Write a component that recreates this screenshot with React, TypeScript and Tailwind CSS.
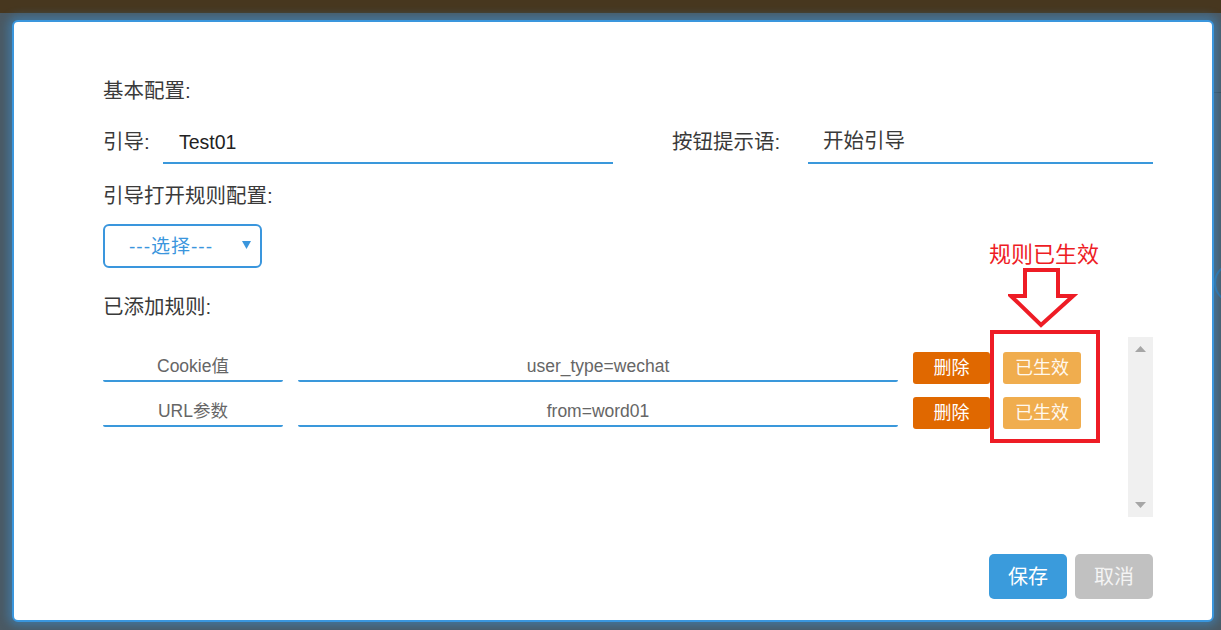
import React from "react";

const font = "font-['Liberation_Sans','Noto_Sans_CJK_SC',sans-serif]";

function RuleRow({ type, value }: { type: string; value: string }) {
  return (
    <div className="flex items-start h-[32px]">
      <div className="w-[180px] h-[30px] border-b-2 border-[#3a98db] rounded-b-[2px] flex items-center justify-center text-[17.5px] text-[#666]">
        {type}
      </div>
      <div className="ml-[15px] w-[600px] h-[30px] border-b-2 border-[#3a98db] rounded-b-[2px] flex items-center justify-center text-[17.5px] text-[#666]">
        {value}
      </div>
      <button className="ml-[15px] w-[77px] h-[32px] rounded-[3px] bg-[#e06800] text-white text-[18px] flex items-center justify-center">
        删除
      </button>
      <button className="ml-[13px] w-[78px] h-[32px] rounded-[3px] bg-[#f0ad4e] text-[#fff8ee] text-[18px] flex items-center justify-center">
        已生效
      </button>
    </div>
  );
}

export default function App() {
  return (
    <div className={`relative w-[1221px] h-[630px] overflow-hidden bg-[#4a5963] ${font}`}>
      <div className="h-[13px] bg-[#47371f]" />
      {/* element peeking at right edge */}
      <div className="absolute left-[1214px] top-[263px] w-[40px] h-[40px] rounded-full border-2 border-[#2d6e9e]" />
      <div className="absolute left-[1214px] top-[92px] w-[10px] h-[1px] bg-[#3b4850]" />
      <div className="pl-[12px] pt-[7px]">
        <div className="relative w-[1202px] h-[602px] bg-white border-2 border-[#3a96dd] rounded-[6px] shadow-[0_0_10px_4px_rgba(58,150,221,0.45)] pl-[89px] pr-[59px] pt-[55px] text-[#3a3a3a]">
          <div className="h-[28px] leading-[28px] text-[20.5px]">基本配置:</div>

          <div className="mt-[16px] flex items-center h-[43px]">
            <div className="w-[60px] text-[20.5px]">引导:</div>
            <div className="w-[450px] h-[43px] border-b-2 border-[#3a98db] flex items-center pl-[16px] pt-[2px] text-[19.5px] text-[#222]">
              Test01
            </div>
            <div className="ml-[59px] w-[136px] text-[20.5px]">按钮提示语:</div>
            <div className="flex-1 h-[43px] border-b-2 border-[#3a98db] flex items-center pl-[15px] text-[20.5px] text-[#3a3a3a]">
              开始引导
            </div>
          </div>

          <div className="mt-[18px] h-[28px] leading-[28px] text-[20.5px]">引导打开规则配置:</div>

          <div className="mt-[14px] relative w-[159px] h-[44px] border-2 border-[#3a96dd] rounded-[6px] flex items-center">
            <span className="ml-[24px] mt-[2px] text-[19px] tracking-[1px] text-[#3a96dd]">---选择---</span>
            <svg className="absolute right-[9px] top-[15px]" width="9" height="8" viewBox="0 0 9 8">
              <polygon points="0,0 9,0 4.5,8" fill="#3a96dd" />
            </svg>
          </div>

          <div className="mt-[25px] h-[28px] leading-[28px] text-[20.5px]">已添加规则:</div>

          <div className="mt-[16px] flex h-[180px]">
            <div className="flex-1 pt-[15px] flex flex-col gap-[13px]">
              <RuleRow type="Cookie值" value="user_type=wechat" />
              <RuleRow type="URL参数" value="from=word01" />
            </div>
            <div className="w-[25px] h-[180px] bg-[#f0f0f0] flex flex-col items-center justify-between py-[9px]">
              <svg width="11" height="6" viewBox="0 0 11 6"><polygon points="5.5,0 11,6 0,6" fill="#a6a6a6" /></svg>
              <svg width="11" height="6" viewBox="0 0 11 6"><polygon points="0,0 11,0 5.5,6" fill="#a6a6a6" /></svg>
            </div>
          </div>

          <div className="mt-[37px] flex justify-end gap-[8px]">
            <button className="w-[78px] h-[45px] rounded-[5px] bg-[#3a9bdc] text-white text-[20px] flex items-center justify-center">
              保存
            </button>
            <button className="w-[78px] h-[45px] rounded-[5px] bg-[#c1c1c1] text-[#f4f4f4] text-[20px] flex items-center justify-center">
              取消
            </button>
          </div>

          {/* red annotation overlay */}
          <div className="absolute left-[975px] top-[220px] text-[22px] leading-[26px] text-[#ee1c25]">规则已生效</div>
          <svg className="absolute left-[994px] top-[246px]" width="70" height="60" viewBox="0 0 70 60">
            <polygon
              points="17,2 50,2 50,28 65,28 33,57 3,28 17,28"
              fill="none"
              stroke="#ee1c25"
              strokeWidth="4"
              strokeLinejoin="miter"
            />
          </svg>
          <div className="absolute left-[976px] top-[308px] w-[110px] h-[113px] border-[4px] border-[#ee1c25]" />
        </div>
      </div>
    </div>
  );
}
